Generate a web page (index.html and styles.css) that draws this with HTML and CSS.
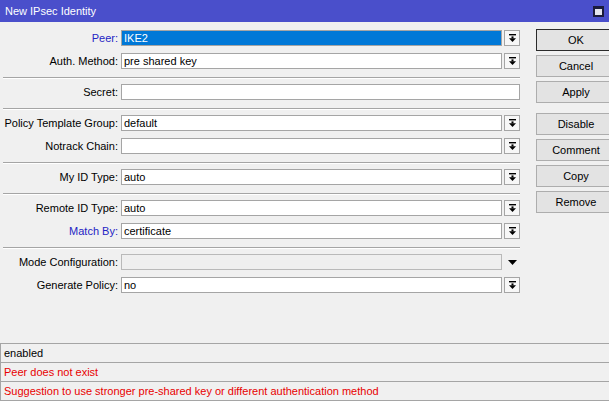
FILE: index.html
```html
<!DOCTYPE html>
<html lang="en">

<head>
    <meta charset="UTF-8">
    <meta name="viewport" content="width=device-width, initial-scale=1.0">
    <title>New IPsec Identity</title>
    <link rel="stylesheet" href="styles.css">
</head>

<body>
    <div class="barra-titulo">
        <span>New IPsec Identity</span>
        <span class="boton-max"></span>
    </div>

    <div class="contenido">
        <div class="formulario">
            <div class="fila">
                <span class="etiqueta enlace">Peer:</span>
                <div class="campo seleccionado">IKE2</div>
                <span class="desplegar"><svg width="7" height="8" viewBox="0 0 7 8"><rect x="0" y="0" width="7" height="1.4"/><rect x="2.5" y="2.4" width="2" height="2"/><polygon points="0,4.2 7,4.2 3.5,8"/></svg></span>
            </div>
            <div class="fila">
                <span class="etiqueta">Auth. Method:</span>
                <div class="campo">pre shared key</div>
                <span class="desplegar"><svg width="7" height="8" viewBox="0 0 7 8"><rect x="0" y="0" width="7" height="1.4"/><rect x="2.5" y="2.4" width="2" height="2"/><polygon points="0,4.2 7,4.2 3.5,8"/></svg></span>
            </div>
            <div class="separador"></div>
            <div class="fila">
                <span class="etiqueta">Secret:</span>
                <div class="campo ancho"></div>
            </div>
            <div class="separador"></div>
            <div class="fila">
                <span class="etiqueta">Policy Template Group:</span>
                <div class="campo">default</div>
                <span class="desplegar"><svg width="7" height="8" viewBox="0 0 7 8"><rect x="0" y="0" width="7" height="1.4"/><rect x="2.5" y="2.4" width="2" height="2"/><polygon points="0,4.2 7,4.2 3.5,8"/></svg></span>
            </div>
            <div class="fila">
                <span class="etiqueta">Notrack Chain:</span>
                <div class="campo"></div>
                <span class="desplegar"><svg width="7" height="8" viewBox="0 0 7 8"><rect x="0" y="0" width="7" height="1.4"/><rect x="2.5" y="2.4" width="2" height="2"/><polygon points="0,4.2 7,4.2 3.5,8"/></svg></span>
            </div>
            <div class="separador"></div>
            <div class="fila">
                <span class="etiqueta">My ID Type:</span>
                <div class="campo">auto</div>
                <span class="desplegar"><svg width="7" height="8" viewBox="0 0 7 8"><rect x="0" y="0" width="7" height="1.4"/><rect x="2.5" y="2.4" width="2" height="2"/><polygon points="0,4.2 7,4.2 3.5,8"/></svg></span>
            </div>
            <div class="separador"></div>
            <div class="fila">
                <span class="etiqueta">Remote ID Type:</span>
                <div class="campo">auto</div>
                <span class="desplegar"><svg width="7" height="8" viewBox="0 0 7 8"><rect x="0" y="0" width="7" height="1.4"/><rect x="2.5" y="2.4" width="2" height="2"/><polygon points="0,4.2 7,4.2 3.5,8"/></svg></span>
            </div>
            <div class="fila">
                <span class="etiqueta enlace">Match By:</span>
                <div class="campo">certificate</div>
                <span class="desplegar"><svg width="7" height="8" viewBox="0 0 7 8"><rect x="0" y="0" width="7" height="1.4"/><rect x="2.5" y="2.4" width="2" height="2"/><polygon points="0,4.2 7,4.2 3.5,8"/></svg></span>
            </div>
            <div class="separador"></div>
            <div class="fila">
                <span class="etiqueta">Mode Configuration:</span>
                <div class="campo inactivo"></div>
                <span class="flecha"><svg width="9" height="5" viewBox="0 0 9 5"><polygon points="0,0 9,0 4.5,5"/></svg></span>
            </div>
            <div class="fila">
                <span class="etiqueta">Generate Policy:</span>
                <div class="campo">no</div>
                <span class="desplegar"><svg width="7" height="8" viewBox="0 0 7 8"><rect x="0" y="0" width="7" height="1.4"/><rect x="2.5" y="2.4" width="2" height="2"/><polygon points="0,4.2 7,4.2 3.5,8"/></svg></span>
            </div>
        </div>

        <div class="botones">
            <button class="boton principal">OK</button>
            <button class="boton">Cancel</button>
            <button class="boton">Apply</button>
            <button class="boton aparte">Disable</button>
            <button class="boton">Comment</button>
            <button class="boton">Copy</button>
            <button class="boton">Remove</button>
        </div>
    </div>

    <div class="estado">
        <div class="estado-fila">enabled</div>
        <div class="estado-fila error">Peer does not exist</div>
        <div class="estado-fila error">Suggestion to use stronger pre-shared key or different authentication method</div>
    </div>
</body>

</html>
```

FILE: styles.css
```css
* {
    margin: 0;
    padding: 0;
    box-sizing: border-box;
}

body {
    height: 100vh;
    overflow: hidden;
    display: flex;
    flex-direction: column;
    background-color: #f0f0f0;
    font-family: "Liberation Sans", Arial, sans-serif;
    font-size: 11px;
    color: #000;
}

.barra-titulo {
    height: 22px;
    flex-shrink: 0;
    display: flex;
    justify-content: space-between;
    align-items: center;
    padding: 0 5px 0 5px;
    background-color: #4a4fcb;
    color: #fff;
}

.boton-max {
    width: 11px;
    height: 11px;
    border: 2px solid #1c1c3c;
    border-top-width: 3px;
    background-color: #e4e4ee;
}

.contenido {
    flex: 1;
    display: flex;
    padding-top: 5px;
}

.formulario {
    width: 521px;
    padding-left: 3px;
}

.fila {
    height: 23px;
    display: flex;
    align-items: flex-start;
    padding-top: 3px;
}

.etiqueta {
    width: 115px;
    height: 16px;
    line-height: 16px;
    margin-right: 3px;
    text-align: right;
    white-space: nowrap;
}

.enlace {
    color: #2424c4;
}

.campo {
    width: 381px;
    height: 16px;
    line-height: 14px;
    padding-left: 2px;
    border: 1px solid #a5a5a5;
    background-color: #fff;
}

.campo.ancho {
    width: 399px;
}

.campo.seleccionado {
    background-color: #0078d7;
    color: #fff;
}

.campo.inactivo {
    background-color: #efefef;
    border-color: #b9b9b9;
}

.desplegar {
    width: 16px;
    height: 16px;
    margin-left: 2px;
    display: flex;
    justify-content: center;
    align-items: center;
    border: 1px solid #a5a5a5;
    background-color: #f7f7f7;
}

.flecha {
    width: 16px;
    height: 16px;
    margin-left: 2px;
    display: flex;
    justify-content: center;
    align-items: center;
}

.separador {
    height: 8px;
    padding-top: 4px;
}

.separador::before {
    content: "";
    display: block;
    width: 517px;
    border-top: 1px solid #a5a5a5;
    border-bottom: 1px solid #fff;
}

.botones {
    margin-left: 16px;
    padding-top: 2px;
    display: flex;
    flex-direction: column;
    gap: 4px;
}

.boton {
    width: 80px;
    height: 22px;
    border: 1px solid #adadad;
    background-color: #e3e3e3;
    font-family: inherit;
    font-size: 11px;
    color: #000;
}

.boton.principal {
    border-color: #2b2b2b;
}

.boton.aparte {
    margin-top: 6px;
}

.estado {
    flex-shrink: 0;
    border-top: 1px solid #a5a5a5;
    border-left: 1px solid #a5a5a5;
}

.estado-fila {
    height: 19px;
    line-height: 18px;
    padding-left: 3px;
    border-bottom: 1px solid #a5a5a5;
    white-space: nowrap;
}

.estado-fila.error {
    color: #e80000;
}
```
